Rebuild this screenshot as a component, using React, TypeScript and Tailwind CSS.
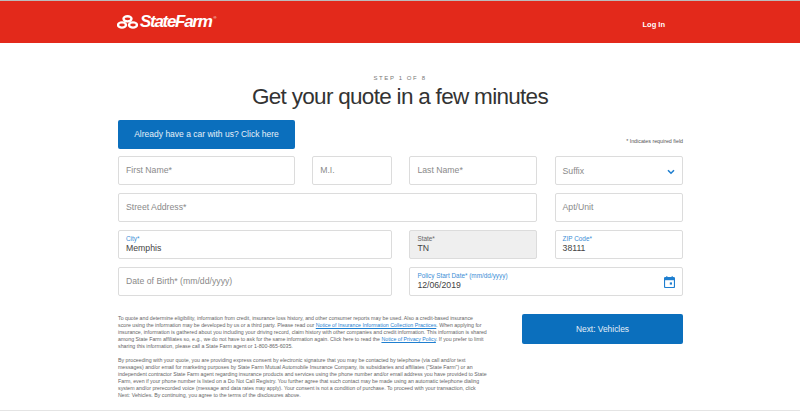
import React from 'react';

function Logo() {
  return (
    <div className="flex items-center gap-[2px] mt-[-1px]">
      <svg width="21" height="14" viewBox="0 0 21 14">
        <g fill="none" stroke="#fff">
          <ellipse cx="10.5" cy="3.8" rx="4" ry="2.6" strokeWidth="2.4" />
          <ellipse cx="5" cy="10" rx="4" ry="2.6" strokeWidth="2.4" />
          <ellipse cx="16" cy="10" rx="4" ry="2.6" strokeWidth="2.4" />
        </g>
      </svg>
      <span className="text-[17px] font-bold italic tracking-[-1.3px] text-white leading-none">StateFarm</span>
      <span className="text-[4px] text-white self-start mt-[2px]">®</span>
    </div>
  );
}

function Field({ label, className }: { label: string; className?: string }) {
  return (
    <div className={'h-[29px] border border-[#dcdcdc] rounded-[2px] bg-white flex items-center pl-[7px] text-[8.7px] text-[#8a8a8a] ' + (className || '')}>
      {label}
    </div>
  );
}

function FilledField({ label, value, className, labelColor, children }: { label: string; value: string; className?: string; labelColor?: string; children?: React.ReactNode }) {
  return (
    <div className={'h-[29px] border border-[#dcdcdc] rounded-[2px] flex items-center justify-between pl-[7px] pr-[7px] ' + (className || 'bg-white')}>
      <div className="flex flex-col">
        <span className={'text-[6.4px] leading-[8px] ' + (labelColor || 'text-[#3b8ed6]')}>{label}</span>
        <span className="text-[8.7px] leading-[11px] text-[#444]">{value}</span>
      </div>
      {children}
    </div>
  );
}

export default function App() {
  return (
    <div className="w-[800px] h-[413px] bg-white overflow-hidden font-['Liberation_Sans',Arial,sans-serif]">
      <header className="h-[43px] bg-[#e3291b] border-t border-[#bbb] flex items-center justify-between pl-[117px] pr-[135px]">
        <Logo />
        <span className="text-[7.5px] font-bold text-white mt-[6px]">Log In</span>
      </header>

      <div className="text-center mt-[32px] text-[6px] leading-[7px] tracking-[1.6px] text-[#777]">STEP 1 OF 8</div>
      <h1 className="text-center text-[22.5px] tracking-[-0.7px] leading-[28px] text-[#333] mt-[1px]">Get your quote in a few minutes</h1>

      <main className="w-[565px] ml-[118px] mt-[9px]">
        <div className="flex justify-between items-end">
          <button className="w-[177px] h-[29px] bg-[#0b6fbd] rounded-[2px] text-[8.5px] text-[#e6f0f8]">Already have a car with us? Click here</button>
          <span className="text-[5.3px] text-[#555] mb-[3px]">* Indicates required field</span>
        </div>

        <div className="grid grid-cols-[177px_80px_128px_128px] gap-x-[17.2px] gap-y-2 mt-[7px]">
          <Field label="First Name*" />
          <Field label="M.I." />
          <Field label="Last Name*" />
          <div className="h-[29px] border border-[#dcdcdc] rounded-[2px] flex items-center justify-between pl-[7px] pr-[7px] pt-[2px] text-[8.7px] text-[#8a8a8a]">
            Suffix
            <svg width="8" height="6" viewBox="0 0 8 6" fill="none" stroke="#1f7fd0" strokeWidth="1.6">
              <path d="M1 1.2 L4 4.2 L7 1.2" />
            </svg>
          </div>

          <Field label="Street Address*" className="col-span-3" />
          <Field label="Apt/Unit" />

          <FilledField label="City*" value="Memphis" className="col-span-2 bg-white" />
          <FilledField label="State*" value="TN" className="bg-[#efefef]" labelColor="text-[#666]" />
          <FilledField label="ZIP Code*" value="38111" />

          <Field label="Date of Birth* (mm/dd/yyyy)" className="col-span-2" />
          <FilledField label="Policy Start Date* (mm/dd/yyyy)" value="12/06/2019" className="col-span-2 bg-white">
            <svg width="11" height="12" viewBox="0 0 11 12">
              <path d="M0.5 2.5 a1 1 0 0 1 1 -1 h8 a1 1 0 0 1 1 1 v8 a1 1 0 0 1 -1 1 h-8 a1 1 0 0 1 -1 -1 z" fill="none" stroke="#1f7fd0" strokeWidth="1.2" />
              <rect x="0.5" y="2" width="10" height="2.2" fill="#1f7fd0" />
              <rect x="2.2" y="0.2" width="1.2" height="2" fill="#1f7fd0" />
              <rect x="7.6" y="0.2" width="1.2" height="2" fill="#1f7fd0" />
              <rect x="5.8" y="6.4" width="2.2" height="2.2" fill="#1f7fd0" />
            </svg>
          </FilledField>
        </div>

        <div className="flex justify-between mt-[19px]">
          <div className="text-[5.25px] leading-[7.1px] text-[#666] whitespace-nowrap">
            <p>
              To quote and determine eligibility, information from credit, insurance loss history, and other consumer reports may be used. Also a credit-based insurance<br />
              score using the information may be developed by us or a third party. Please read our <span className="text-[#1f7fd0] underline">Notice of Insurance Information Collection Practices</span>. When applying for<br />
              insurance, information is gathered about you including your driving record, claim history with other companies and credit information. This information is shared<br />
              among State Farm affiliates so, e.g., we do not have to ask for the same information again. Click here to read the <span className="text-[#1f7fd0] underline">Notice of Privacy Policy</span>. If you prefer to limit<br />
              sharing this information, please call a State Farm agent or 1-800-865-6035.
            </p>
            <p className="mt-[6.5px]">
              By proceeding with your quote, you are providing express consent by electronic signature that you may be contacted by telephone (via call and/or text<br />
              messages) and/or email for marketing purposes by State Farm Mutual Automobile Insurance Company, its subsidiaries and affiliates ("State Farm") or an<br />
              independent contractor State Farm agent regarding insurance products and services using the phone number and/or email address you have provided to State<br />
              Farm, even if your phone number is listed on a Do Not Call Registry. You further agree that such contact may be made using an automatic telephone dialing<br />
              system and/or prerecorded voice (message and data rates may apply). Your consent is not a condition of purchase. To proceed with your transaction, click<br />
              Next: Vehicles. By continuing, you agree to the terms of the disclosures above.
            </p>
          </div>
          <button className="w-[161px] h-[30px] mt-[-1px] bg-[#0b6fbd] rounded-[2px] text-[8.4px] text-[#e6f0f8]">Next: Vehicles</button>
        </div>
      </main>
      <div className="mt-[10px] border-t border-[#e4e4e4]" />
    </div>
  );
}
